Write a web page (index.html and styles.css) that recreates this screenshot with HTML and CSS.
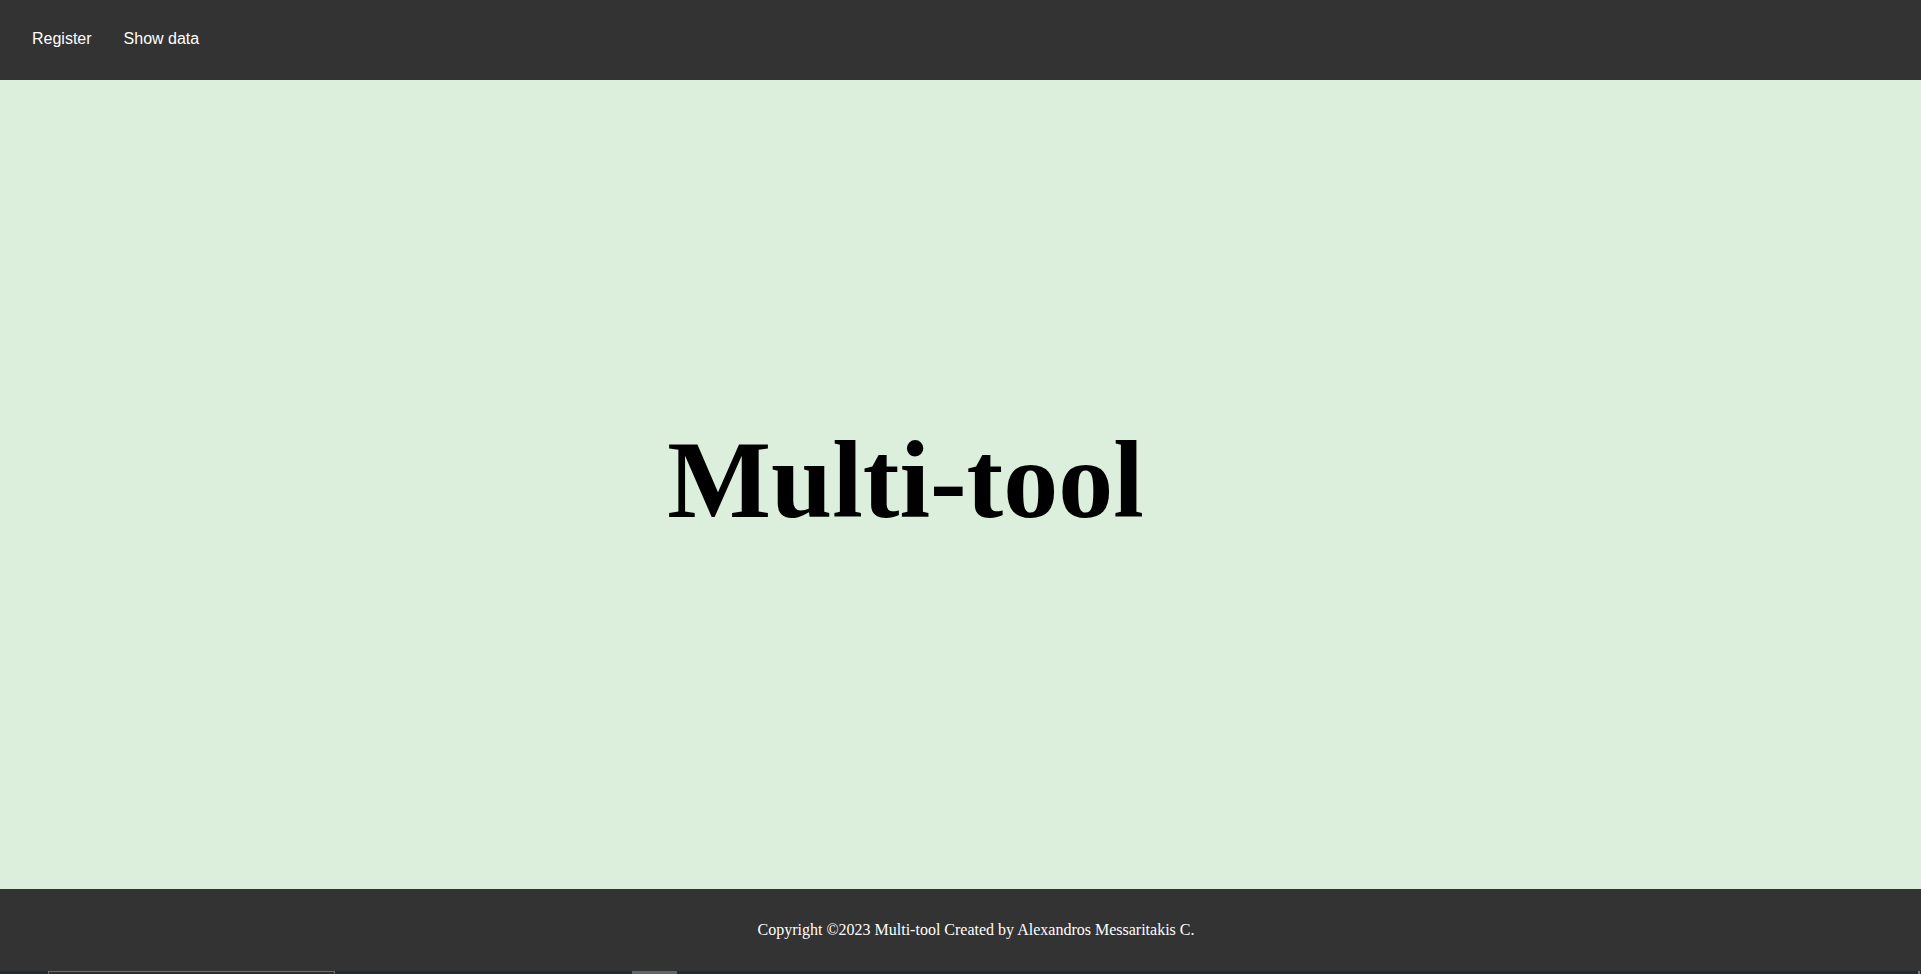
FILE: index.html
```html
<!DOCTYPE html>
<html lang="en">
<head>
<meta charset="utf-8">
<title>Multi-tool</title>
<link rel="stylesheet" href="styles.css">
</head>
<body>
<header class="topnav">
  <a class="navlink" href="#">Register</a>
  <a class="navlink" href="#">Show data</a>
</header>
<main class="hero">
  <h1 class="title">Multi-tool</h1>
</main>
<footer class="footer">
  <p class="copy">Copyright ©2023 Multi-tool Created by Alexandros Messaritakis C.</p>
</footer>
<div class="strip">
  <span class="strip-box"></span>
  <span class="strip-block"></span>
  <span class="strip-end"></span>
</div>
</body>
</html>
```
FILE: styles.css
```css
html, body {
  margin: 0;
  padding: 0;
}
body {
  background: #333333;
  font-family: "Liberation Serif", "Times New Roman", serif;
}
.topnav {
  box-sizing: border-box;
  height: 80px;
  background: #333333;
  display: flex;
  align-items: center;
  padding: 0 16px 3px 16px;
}
.navlink {
  font-family: "Liberation Sans", Arial, sans-serif;
  font-size: 16px;
  color: #ffffff;
  text-decoration: none;
  padding: 14px 16px;
}
.hero {
  box-sizing: border-box;
  height: 809px;
  background: #dcefdc;
  display: flex;
  align-items: center;
  justify-content: center;
  padding: 0 110px 8px 0;
}
.title {
  margin: 0;
  font-family: "Liberation Serif", "Times New Roman", serif;
  font-weight: bold;
  font-size: 110px;
  color: #000000;
}
.footer {
  box-sizing: border-box;
  height: 82px;
  background: #333333;
  display: flex;
  align-items: center;
  justify-content: center;
  padding-left: 31px;
}
.copy {
  margin: 0;
  font-size: 16px;
  color: #ffffff;
}
.strip {
  height: 3px;
  background: #1f2c32;
  display: flex;
  align-items: stretch;
}
.strip-box {
  box-sizing: border-box;
  width: 287px;
  margin-left: 48px;
  border: 1px solid #6e6e6e;
  border-bottom: none;
  background: #2a2f33;
}
.strip-block {
  width: 45px;
  margin-left: 297px;
  background: #5e686c;
}
.strip-end {
  width: 2px;
  margin-left: auto;
  margin-right: 1px;
  background: #7a7f82;
}
```
